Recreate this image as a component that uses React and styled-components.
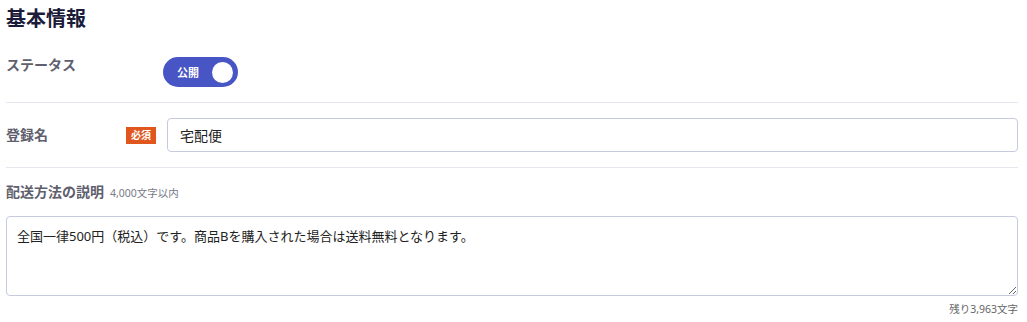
import styled, { createGlobalStyle } from 'styled-components';

const GlobalStyle = createGlobalStyle`
  body {
    margin: 0;
    background: #fff;
    font-family: "Noto Sans", "Noto Sans CJK JP", sans-serif;
    color: #222;
  }
`;

const Page = styled.div`
  padding: 5px 9px 0 6px;
`;

const Title = styled.h2`
  margin: 0;
  font-size: 20px;
  line-height: 28px;
  font-weight: 700;
  color: #1b1b3a;
`;

const Row = styled.div`
  display: flex;
  align-items: ${({ top }) => (top ? 'flex-start' : 'center')};
  padding: ${({ pad }) => pad};
  border-bottom: ${({ divider }) => (divider ? '1px solid #e6e6ee' : 'none')};
`;

const LabelCell = styled.div`
  width: 150px;
  flex: none;
  display: flex;
  align-items: center;
  justify-content: space-between;
`;

const Label = styled.span`
  font-size: 14px;
  line-height: 16px;
  font-weight: 700;
  color: #5f5f6e;
`;

const Badge = styled.span`
  background: #e0571d;
  color: #fff;
  font-size: 10px;
  font-weight: 700;
  line-height: 17px;
  width: 30px;
  text-align: center;
`;

const Value = styled.div`
  flex: 1;
  padding-left: ${({ gap }) => gap}px;
`;

const Toggle = styled.div`
  width: 75px;
  height: 30px;
  border-radius: 15px;
  background: #4855c4;
  display: flex;
  align-items: center;
  justify-content: space-between;
  padding: 0 5px 0 14px;
  box-sizing: border-box;
  color: #fff;
  font-size: 11px;
  font-weight: 700;
`;

const Knob = styled.span`
  width: 21px;
  height: 21px;
  border-radius: 50%;
  background: #fff;
`;

const Input = styled.input`
  width: 100%;
  height: 34px;
  box-sizing: border-box;
  border: 1px solid #c6cbdc;
  border-radius: 4px;
  padding: 0 12px;
  font: inherit;
  font-size: 14px;
  color: #222;
  outline: none;
`;

const Section = styled.div`
  padding-top: 15px;
`;

const Heading = styled.div`
  display: flex;
  align-items: baseline;
  gap: 6px;
  line-height: 20px;
  margin-bottom: 13px;
`;

const Hint = styled.span`
  font-size: 10.5px;
  color: #7a7a88;
`;

const TextArea = styled.textarea`
  display: block;
  width: 100%;
  height: 80px;
  box-sizing: border-box;
  border: 1px solid #c6cbdc;
  border-radius: 4px;
  padding: 9px 10px;
  font: inherit;
  font-size: 13px;
  line-height: 20px;
  color: #222;
  outline: none;
`;

const Counter = styled.div`
  text-align: right;
  font-size: 10.5px;
  line-height: 16px;
  margin-top: 5px;
  color: #666;
`;

export default function App() {
  const desc = '全国一律500円（税込）です。商品Bを購入された場合は送料無料となります。';
  const remaining = 4000 - desc.length;
  return (
    <>
      <GlobalStyle />
      <Page>
        <Title>基本情報</Title>
        <Row top divider pad="24px 0 15px">
          <LabelCell>
            <Label>ステータス</Label>
          </LabelCell>
          <Value gap={7}>
            <Toggle>
              公開
              <Knob />
            </Toggle>
          </Value>
        </Row>
        <Row divider pad="15px 0">
          <LabelCell>
            <Label>登録名</Label>
            <Badge>必須</Badge>
          </LabelCell>
          <Value gap={11}>
            <Input defaultValue="宅配便" />
          </Value>
        </Row>
        <Section>
          <Heading>
            <Label>配送方法の説明</Label>
            <Hint>4,000文字以内</Hint>
          </Heading>
          <TextArea defaultValue={desc} />
          <Counter>残り{remaining.toLocaleString()}文字</Counter>
        </Section>
      </Page>
    </>
  );
}
